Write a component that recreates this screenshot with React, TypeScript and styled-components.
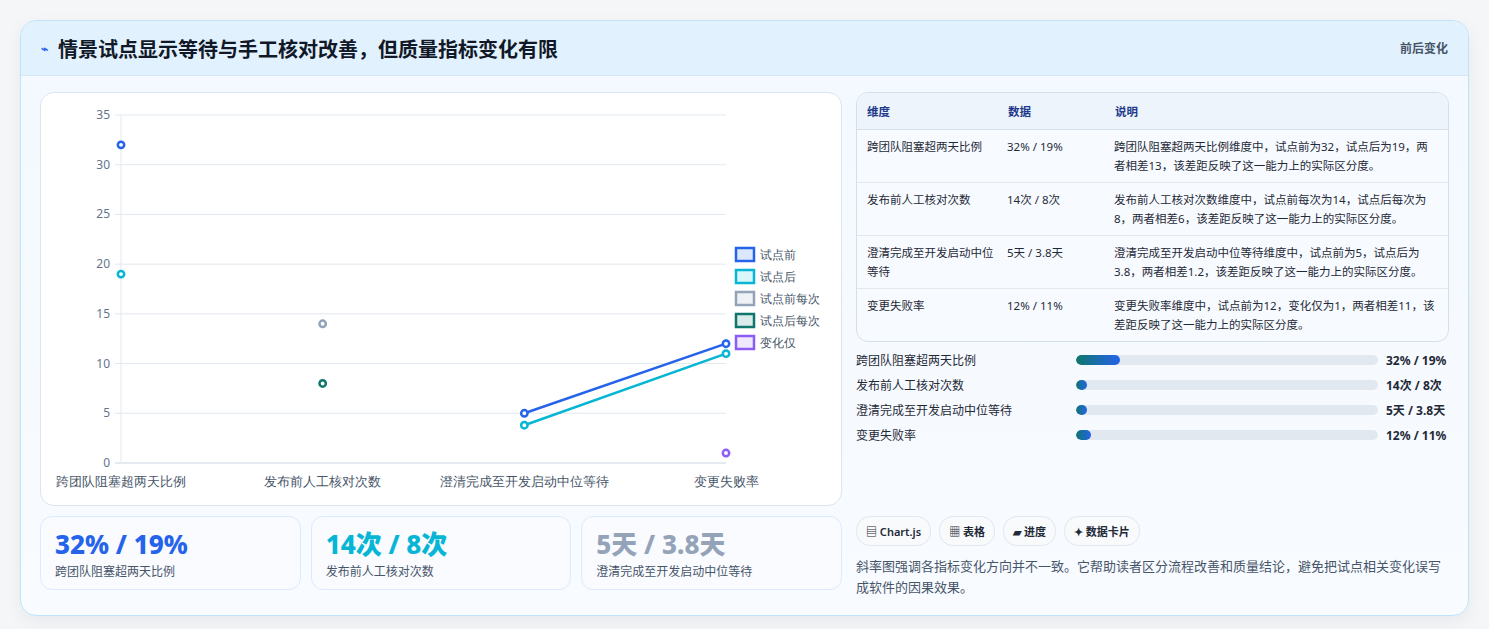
import React from "react";
import styled, { createGlobalStyle } from "styled-components";

const Global = createGlobalStyle`
  body { margin: 0; background: #f3f4f6; font-family: "Noto Sans", "Noto Sans CJK SC", sans-serif; }
`;

const Page = styled.div`
  padding: 20px;
  height: 629px;
  box-sizing: border-box;
  background: #f5f6f8;
`;
const Card = styled.div`
  border: 1px solid #bfe3fb;
  border-radius: 16px;
  background: linear-gradient(180deg, #f3f9ff, #f8fbff);
  overflow: hidden;
  box-shadow: 0 6px 18px rgba(15, 23, 42, 0.06);
`;
const Header = styled.div`
  height: 54px;
  display: flex;
  align-items: center;
  justify-content: space-between;
  padding: 0 20px;
  background: #e1f1fd;
  border-bottom: 1px solid #d3e8f8;
`;
const Title = styled.h1`
  margin: 0;
  font-size: 20px;
  font-weight: 700;
  color: #111827;
  display: flex;
  align-items: center;
  gap: 10px;
`;
const Tag = styled.span`
  font-size: 12px;
  font-weight: 600;
  color: #475569;
`;
const Body = styled.div`
  display: grid;
  grid-template-columns: 802px 593px;
  gap: 14px;
  padding: 16px 19px 17px 19px;
`;
const Col = styled.div`
  display: flex;
  flex-direction: column;
`;
const ChartCard = styled.div`
  height: 412px;
  background: #fff;
  border: 1px solid #dbe4ef;
  border-radius: 14px;
`;
const Stats = styled.div`
  margin-top: 10px;
  display: grid;
  grid-template-columns: repeat(3, 1fr);
  gap: 10px;
`;
const Stat = styled.div`
  height: 74px;
  box-sizing: border-box;
  border: 1px solid #dbeafe;
  border-radius: 12px;
  background: #f9fbff;
  padding: 9px 14px;
`;
const StatValue = styled.div<{ $c: string }>`
  font-size: 26px;
  font-weight: 800;
  color: ${(p) => p.$c};
  line-height: 36px;
`;
const StatLabel = styled.div`
  font-size: 12px;
  color: #475569;
`;
const Table = styled.table`
  width: 100%;
  border-collapse: separate;
  border-spacing: 0;
  border: 1px solid #d5dfea;
  border-radius: 12px;
  overflow: hidden;
  font-size: 11.5px;
  color: #1f2937;
  background: #f7fbff;
  th {
    text-align: left;
    color: #1e3a8a;
    font-weight: 700;
    height: 34px;
    background: #eef4fc;
    border-bottom: 1px solid #d5dfea;
  }
  td {
    vertical-align: top;
    padding: 7px 10px 7px 0;
    height: 38px;
    line-height: 19px;
    border-bottom: 1px solid #e2e8f0;
  }
  tr:last-child td { border-bottom: none; }
  th:first-child, td:first-child { padding-left: 10px; width: 130px; }
  th:nth-child(2), td:nth-child(2) { width: 97px; }
`;
const Bars = styled.div`
  margin-top: 9px;
  display: flex;
  flex-direction: column;
  gap: 7px;
`;
const BarRow = styled.div`
  display: grid;
  grid-template-columns: 212px 302px 1fr;
  gap: 8px;
  align-items: center;
  font-size: 12px;
  height: 18px;
  color: #1f2937;
  white-space: nowrap;
`;
const Track = styled.div`
  height: 10px;
  background: #e2e8f0;
  border-radius: 5px;
  overflow: hidden;
`;
const Fill = styled.div`
  height: 100%;
  border-radius: 5px;
  background: linear-gradient(90deg, #0f766e, #2563eb);
`;
const BarVal = styled.span`
  font-weight: 700;
`;
const Chips = styled.div`
  margin-top: 72px;
  display: flex;
  gap: 8px;
`;
const Chip = styled.span`
  height: 28px;
  padding: 0 9px;
  display: inline-flex;
  align-items: center;
  gap: 3px;
  border: 1px solid #e2e8f0;
  border-radius: 14px;
  background: #f8fafc;
  font-size: 11px;
  font-weight: 600;
  color: #1f2937;
`;
const Note = styled.p`
  margin: 10px 0 0;
  font-size: 13px;
  line-height: 21px;
  color: #475569;
`;

const cats = ["跨团队阻塞超两天比例", "发布前人工核对次数", "澄清完成至开发启动中位等待", "变更失败率"];
const X0 = 80, X1 = 685, YT = 22, YB = 370;
const cx = (i: number) => X0 + ((X1 - X0) / 3) * i;
const cy = (v: number) => YB - ((YB - YT) / 35) * v;
const series = [
  { name: "试点前", c: "#2563eb", bg: "#dbe7fd", pts: [32, null, 5, 12] },
  { name: "试点后", c: "#06b6d4", bg: "#d9f6fb", pts: [19, null, 3.8, 11] },
  { name: "试点前每次", c: "#94a3b8", bg: "#eef1f5", pts: [null, 14, null, null] },
  { name: "试点后每次", c: "#0f766e", bg: "#dbebe9", pts: [null, 8, null, null] },
  { name: "变化仅", c: "#8b5cf6", bg: "#efe8fe", pts: [null, null, null, 1] },
];

function Chart() {
  return (
    <svg width="802" height="412" style={{ display: "block" }} fontFamily="Noto Sans, sans-serif">
      {[0, 5, 10, 15, 20, 25, 30, 35].map((v) => (
        <g key={v}>
          <line x1={X0 - 6} x2={X1} y1={cy(v)} y2={cy(v)} stroke={v === 0 ? "#cbd5e1" : "#e2e8f0"} />
          <text x={X0 - 11} y={cy(v) + 4} fontSize="12" fill="#64748b" textAnchor="end">{v}</text>
        </g>
      ))}
      <line x1={X0} x2={X0} y1={YT} y2={YB} stroke="#e2e8f0" />
      {cats.map((c, i) => (
        <text key={c} x={cx(i)} y={YB + 23} fontSize="12.5" fill="#475569" textAnchor="middle">{c}</text>
      ))}
      {series.map((s) => {
        const segs: React.ReactNode[] = [];
        for (let i = 0; i < 3; i++) {
          const a = s.pts[i], b = s.pts[i + 1];
          if (a != null && b != null)
            segs.push(<line key={i} x1={cx(i)} y1={cy(a)} x2={cx(i + 1)} y2={cy(b)} stroke={s.c} strokeWidth="2.5" />);
        }
        return (
          <g key={s.name}>
            {segs}
            {s.pts.map((v, i) => v != null && (
              <circle key={i} cx={cx(i)} cy={cy(v)} r="3.2" fill="#fff" stroke={s.c} strokeWidth="2.5" />
            ))}
          </g>
        );
      })}
      {series.map((s, i) => (
        <g key={s.name} transform={`translate(695, ${155 + i * 22})`}>
          <rect x="0" y="0" width="18" height="13" fill={s.bg} stroke={s.c} strokeWidth="2.5" />
          <text x="24" y="11" fontSize="12" fill="#475569">{s.name}</text>
        </g>
      ))}
    </svg>
  );
}

const rows = [
  ["跨团队阻塞超两天比例", "32% / 19%", "跨团队阻塞超两天比例维度中，试点前为32，试点后为19，两者相差13，该差距反映了这一能力上的实际区分度。"],
  ["发布前人工核对次数", "14次 / 8次", "发布前人工核对次数维度中，试点前每次为14，试点后每次为8，两者相差6，该差距反映了这一能力上的实际区分度。"],
  ["澄清完成至开发启动中位等待", "5天 / 3.8天", "澄清完成至开发启动中位等待维度中，试点前为5，试点后为3.8，两者相差1.2，该差距反映了这一能力上的实际区分度。"],
  ["变更失败率", "12% / 11%", "变更失败率维度中，试点前为12，变化仅为1，两者相差11，该差距反映了这一能力上的实际区分度。"],
];
const bars: [string, number, string][] = [
  ["跨团队阻塞超两天比例", 14.5, "32% / 19%"],
  ["发布前人工核对次数", 3.5, "14次 / 8次"],
  ["澄清完成至开发启动中位等待", 3.5, "5天 / 3.8天"],
  ["变更失败率", 5, "12% / 11%"],
];

export default function App() {
  return (
    <>
      <Global />
      <Page>
        <Card>
          <Header>
            <Title><span style={{ color: "#2563eb", fontSize: 12 }}>⌁</span>情景试点显示等待与手工核对改善，但质量指标变化有限</Title>
            <Tag>前后变化</Tag>
          </Header>
          <Body>
            <Col>
              <ChartCard><Chart /></ChartCard>
              <Stats>
                <Stat><StatValue $c="#2563eb">32% / 19%</StatValue><StatLabel>跨团队阻塞超两天比例</StatLabel></Stat>
                <Stat><StatValue $c="#06b6d4">14次 / 8次</StatValue><StatLabel>发布前人工核对次数</StatLabel></Stat>
                <Stat><StatValue $c="#94a3b8">5天 / 3.8天</StatValue><StatLabel>澄清完成至开发启动中位等待</StatLabel></Stat>
              </Stats>
            </Col>
            <Col>
              <Table>
                <thead><tr><th>维度</th><th>数据</th><th>说明</th></tr></thead>
                <tbody>
                  {rows.map((r) => (
                    <tr key={r[0]}><td>{r[0]}</td><td>{r[1]}</td><td>{r[2]}</td></tr>
                  ))}
                </tbody>
              </Table>
              <Bars>
                {bars.map(([l, w, v]) => (
                  <BarRow key={l}>
                    <span>{l}</span>
                    <Track><Fill style={{ width: `${w}%` }} /></Track>
                    <BarVal>{v}</BarVal>
                  </BarRow>
                ))}
              </Bars>
              <Chips>
                <Chip>▤ Chart.js</Chip>
                <Chip>▦ 表格</Chip>
                <Chip>▰ 进度</Chip>
                <Chip>✦ 数据卡片</Chip>
              </Chips>
              <Note>斜率图强调各指标变化方向并不一致。它帮助读者区分流程改善和质量结论，避免把试点相关变化误写成软件的因果效果。</Note>
            </Col>
          </Body>
        </Card>
      </Page>
    </>
  );
}
